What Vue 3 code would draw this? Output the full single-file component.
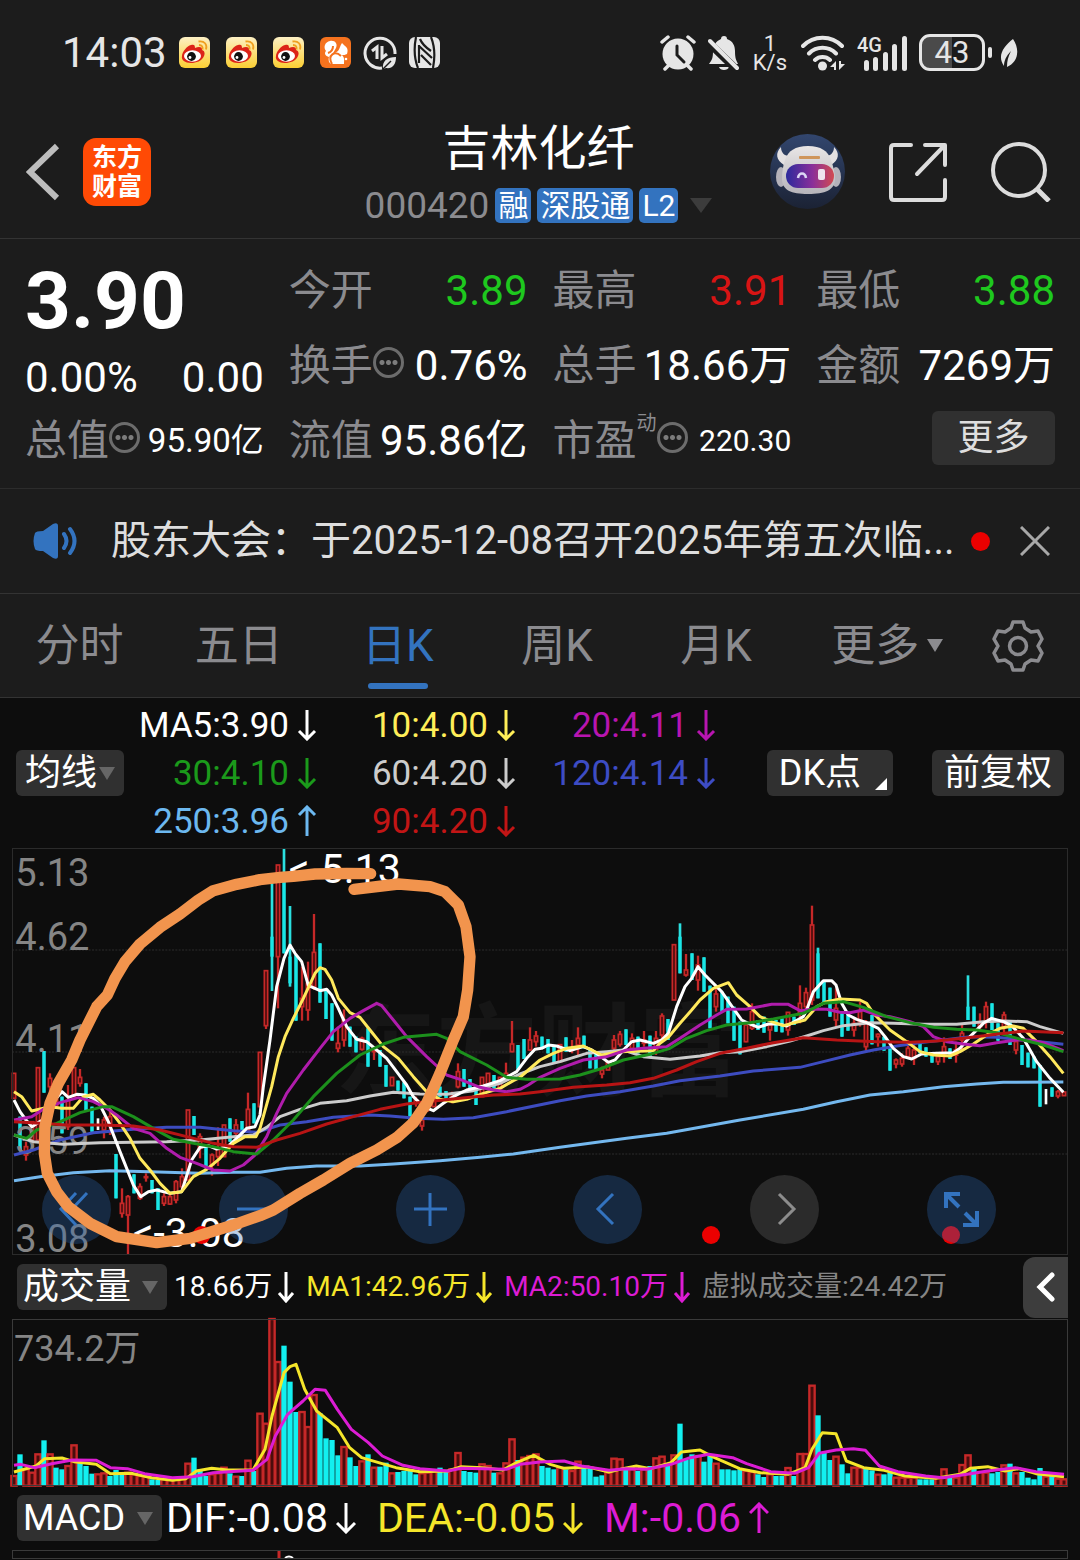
<script setup>
import { ref } from 'vue'

const weiboCount = 3
const tabs = ['分时', '五日', '日K', '周K', '月K']
const activeTab = ref('日K')

const averages = [
  { text: 'MA5:3.90', color: '#ffffff', up: false },
  { text: '10:4.00', color: '#ffee58', up: false },
  { text: '20:4.11', color: '#b815b0', up: false },
  { text: '30:4.10', color: '#1b9a1b', up: false },
  { text: '60:4.20', color: '#cccccc', up: false },
  { text: '120:4.14', color: '#3d4cc4', up: false },
  { text: '250:3.96', color: '#6cb8f0', up: true },
  { text: '90:4.20', color: '#c21515', up: false },
]

const volumeStats = [
  { text: '18.66万', color: '#ffffff' },
  { text: 'MA1:42.96万', color: '#f5e62a' },
  { text: 'MA2:50.10万', color: '#dc1cd4' },
]

const macdStats = [
  { text: 'DIF:-0.08', color: '#ffffff', up: false },
  { text: 'DEA:-0.05', color: '#f5e62a', up: false },
  { text: 'M:-0.06', color: '#dc1cd4', up: true },
]

// Each candle: kind (r rise, c fall, w flat), high, low, then the body's top and bottom when it is shorter than the wick.
const candleData = `r 700 775,c 830 930,r 905 962 920 945,r 845 900,r 683 900,c 633 758,r 700 755 715 740,r 750 800,c 770 880,r 735 870 780 860,
r 683 770,r 687 740 712 730,c 730 815,c 800 875,w 835 870,r 830 895 840 870,r 810 885 830 850,c 942 1075,r 1045 1133 1090 1120,r 1065 1245 1070 1125,
c 1003 1060,r 1030 1080 1040 1075,r 1000 1025 1010 1012,c 1020 1060,c 1045 1110,r 1060 1098 1070 1090,r 1060 1095 1070 1092,r 1020 1090 1025 1080,r 985 1050 1010 1040,r 810 1020,
c 828 885,r 880 955 890 925,c 920 985,r 940 1007 945 975,r 862 978 925 950,r 855 950,c 835 905,r 837 900 855 880,c 843 880,r 758 870 808 870,
c 790 850,r 637 800,r 392 567 392 557,c 130 453 290 350,r 75 505 75 350,c 24 340 110 340,c 198 440 350 430,c 345 542,r 380 542 475 500,r 365 542 430 510,
r 222 450 337 440,c 310 488,c 450 537,c 490 602,r 560 637 610 625,r 508 620 540 600,c 560 620,c 590 637,r 590 632 595 628,c 565 680,
r 620 660 630 635,c 630 680,c 675 740,r 712 737,c 722 752,c 727 775,c 770 840,r 770 800 780 790,r 800 872 840 858,r 770 815 790 800,
r 770 800,c 740 770,c 753 775,r 755 790 770 775,r 670 745 695 740,c 687 740,c 717 755,c 740 795,r 712 770,r 700 745,
c 705 745,r 712 745,r 668 715 700 712,r 543 637 612 635,c 615 690,c 597 657,r 562 632 600 630,r 573 620 588 605,c 590 625,c 597 640,
c 615 668,r 614 665,c 592 635,r 600 640 625 630,r 562 645 595 615,c 587 625,c 630 685,c 640 690,r 680 715 690 702,r 665 690,
r 585 640 600 625,r 573 620 583 613,c 568 615,r 580 640 595 625,c 590 640,r 573 620 600 610,c 587 650,r 573 645 595 635,r 520 600 528 585,c 537 600,
r 314 480,c 250 400 290 400,r 342 410 390 405,c 340 420,r 347 452 375 420,c 352 455,c 437 565,r 445 515 462 500,c 455 515,c 470 550,
c 500 602,c 545 643,r 550 607 555 605,r 490 570 515 565,c 540 570,c 530 578,r 555 602 555 570,c 540 575,c 535 577,r 517 587 517 570,
c 530 555,r 436 550 490 520,r 443 510 458 500,r 197 495 255 480,c 323 475 340 475,c 420 490,c 443 530,r 445 563 505 540,c 520 590,c 515 572,
r 530 590 550 570,r 485 560 515 545,r 540 632 550 620,c 525 613,r 580 620 583 590,c 590 632,c 625 692,r 655 685 660 672,r 640 680 655 672,r 600 655 625 650,
r 615 675 630 655,c 610 640,c 622 650,c 640 668,r 640 675 650 665,r 592 668 620 640,c 625 657,r 605 668 630 645,r 555 635 580 600,c 406 540 500 540,
c 500 560,r 520 570 550 560,r 485 565 500 545,c 490 570,c 550 602,r 515 580 525 560,c 545 615,r 600 643 605 630,c 615 675,c 638 682,
c 650 685,c 675 800,w 747 793,c 742 770,r 750 775 755 768,r 756 767`

const xAt = (i) => 42 + 18 * i

const candles = candleData.split(',').map((entry, i) => {
  const [kind, ...n] = entry.trim().split(' ')
  const [high, low, top = high, bottom = low] = n.map(Number)
  return { kind, x: xAt(i), high, low, top, height: Math.max(bottom - top, 3) }
})

const movingAverages = [
  { color: '#74b8ee', points: '42,1022 120,1010 220,998 330,992 450,995 600,1000 700,997 780,997 860,985 950,978 1080,978 1180,972 1320,962 1440,952 1540,942 1680,922 1880,895 2000,880 2100,862 2220,840 2410,808 2510,785 2610,765 2710,755 2830,740 2930,732 3010,727 3190,726' },
  { color: '#3d4cc0', points: '42,945 100,930 180,900 280,878 400,868 500,862 600,862 700,872 770,877 840,855 920,845 1000,832 1110,825 1170,828 1250,835 1330,838 1420,833 1520,815 1680,782 1760,768 1860,755 1960,738 2040,722 2160,708 2260,693 2400,682 2470,665 2550,645 2620,630 2690,618 2770,607 2830,600 2910,590 2990,592 3070,600 3190,613' },
  { color: '#cccccc', points: '42,885 100,905 190,913 300,908 400,907 500,905 600,900 700,890 760,885 800,862 840,830 900,808 960,790 1040,782 1110,768 1180,757 1260,762 1340,763 1420,752 1500,730 1560,702 1620,680 1680,665 1760,640 1820,635 1870,630 1900,640 1930,650 2010,658 2100,648 2160,638 2220,635 2300,620 2370,603 2420,588 2470,572 2530,557 2610,548 2680,550 2770,553 2870,553 2950,545 3010,543 3080,545 3120,560 3190,580' },
  { color: '#ffffff', points: '42,780 60,815 78,840 96,860 114,848 132,838 155,790 186,755 205,772 230,763 255,765 280,775 300,795 325,845 360,935 400,1035 422,1070 445,1055 470,1050 510,1060 545,1055 575,960 600,922 625,917 650,927 680,922 710,895 740,865 765,860 780,825 790,740 810,600 830,440 852,355 870,315 885,340 905,365 925,437 945,445 960,452 980,448 995,465 1015,505 1040,560 1070,598 1100,605 1130,630 1160,655 1190,695 1220,735 1240,770 1270,800 1300,812 1330,790 1360,770 1400,750 1450,738 1500,722 1550,695 1580,655 1605,628 1625,625 1645,615 1670,618 1710,632 1750,620 1775,630 1805,652 1825,667 1845,660 1870,630 1895,605 1920,600 1960,610 1985,600 2005,580 2030,500 2055,440 2075,415 2094,380 2115,405 2140,430 2165,455 2200,505 2225,540 2250,552 2275,562 2305,552 2335,552 2360,558 2410,530 2420,510 2440,455 2470,422 2495,422 2508,435 2525,490 2545,525 2570,538 2600,548 2635,565 2655,590 2680,625 2710,650 2735,657 2765,642 2810,640 2860,638 2880,625 2910,590 2950,550 2975,535 3010,545 3035,557 3070,595 3110,665 3150,715 3190,757' },
  { color: '#ffe95c', points: '42,755 65,770 95,813 150,800 185,805 220,805 250,770 280,763 300,780 330,810 360,850 390,895 420,955 450,990 480,1030 510,1060 545,1055 580,1010 620,988 660,955 700,910 735,890 768,890 780,865 815,740 835,650 855,590 880,535 910,475 945,400 960,383 975,388 995,420 1015,475 1050,518 1080,532 1110,570 1150,620 1195,655 1240,710 1280,755 1320,778 1360,785 1400,778 1450,760 1500,745 1540,722 1560,712 1585,690 1620,660 1660,640 1700,625 1750,618 1775,630 1805,645 1860,635 1960,632 1980,610 2005,592 2040,550 2075,510 2100,480 2140,445 2185,428 2210,465 2250,500 2280,530 2315,545 2350,557 2415,540 2450,500 2480,485 2520,477 2580,480 2600,490 2620,520 2670,570 2720,605 2760,635 2800,645 2850,648 2880,635 2920,612 2960,585 3000,565 3040,558 3070,565 3110,605 3150,650 3190,700' },
  { color: '#b01cac', points: '42,840 95,830 130,808 180,788 235,773 280,785 320,805 350,825 400,865 450,880 500,925 540,952 590,970 640,990 690,993 730,975 765,945 800,890 830,820 860,760 910,690 960,625 1000,575 1050,535 1090,512 1130,490 1145,497 1180,540 1220,590 1280,650 1340,705 1380,718 1440,742 1480,750 1520,755 1560,748 1585,735 1620,712 1680,685 1750,660 1820,650 1880,630 1930,625 2000,620 2040,595 2100,555 2150,525 2180,508 2240,507 2315,493 2365,493 2400,512 2440,507 2480,508 2520,517 2550,518 2590,510 2630,525 2670,530 2730,545 2770,560 2800,590 2840,605 2890,612 2940,617 2990,608 3050,600 3090,600 3130,608 3190,632' },
  { color: '#1c901c', points: '42,885 80,895 110,870 170,850 240,818 310,800 335,800 400,830 460,865 520,898 580,910 640,920 700,935 770,942 820,900 880,840 940,770 1010,700 1080,645 1150,612 1210,592 1310,583 1340,595 1380,635 1460,675 1520,712 1580,718 1680,717 1740,705 1800,687 1870,660 1950,643 2010,625 2060,595 2120,572 2180,555 2250,548 2320,537 2410,520 2470,490 2530,485 2590,502 2660,530 2730,548 2800,562 2870,568 2930,570 2990,578 3070,600 3130,615 3190,635' },
  { color: '#b81414', points: '42,845 120,850 200,855 300,855 400,858 480,870 560,890 640,910 700,920 770,922 830,900 900,880 980,852 1060,830 1140,808 1220,792 1280,785 1380,775 1480,765 1560,762 1620,755 1720,742 1820,735 1890,728 1960,715 2030,690 2090,665 2160,640 2240,625 2320,608 2410,593 2510,600 2630,605 2730,607 2810,603 2890,595 2970,585 3070,573 3190,578' },
]

const volumeData = `r680 c615 r660 r670 r615 c573 r615 c655 c660 r650 r588 c638 c650 c673 r675 r672 c680 c662 c672 r670
r675 r680 r682 c690 c692 r690 r690 r690 r688 r643 c625 c660 c680 r675 r672 r655 c672 r682 c680 r634
c665 r493 r523 r209 r338 c289 c397 c488 r488 r533 r437 c492 c567 c572 c618 r593 c624 c650 r636 c615
r655 c652 c640 r672 c668 c665 c665 c675 r672 r670 r665 c655 c668 r660 r611 c665 c668 c670 r645 r650
c670 r672 r642 r570 c632 r625 r620 r615 c650 c655 c660 r655 c660 r665 r637 c655 c655 c682 c678 r670
r628 r630 c660 r660 c665 r660 c650 r627 r622 c650 r618 c523 c630 c615 r620 c637 c620 r643 c660 c660
c663 c660 r665 r668 c675 c683 r675 c680 c680 r656 c680 r614 r614 r409 c498 c610 c632 r622 c645 c672
r655 r655 c655 c663 r676 c675 c670 r685 r685 r685 r685 c690 c690 c690 r686 r660 c682 r685 r647 r618
c655 r668 r670 c672 c668 r648 c643 r672 c668 c685 c690 c656 r682 c680 r688 r690`

const volumes = volumeData.split(/\s+/).map((entry, i) => ({
  kind: entry[0],
  x: xAt(i),
  top: Number(entry.slice(1)),
}))

const volumeLines = [
  { color: '#f5e62a', points: '42,668 108,650 134,628 186,626 222,637 289,645 331,673 393,672 455,685 517,693 558,688 589,665 635,657 682,662 759,662 795,600 816,500 852,370 870,352 888,345 914,420 950,485 1012,535 1049,595 1085,625 1136,640 1188,655 1260,667 1343,665 1384,652 1446,655 1508,662 1550,640 1601,618 1651,645 1692,657 1765,653 1827,668 1868,658 1909,650 1951,658 2013,640 2044,608 2100,602 2137,622 2178,640 2219,658 2281,670 2364,675 2415,655 2436,600 2467,550 2508,553 2539,635 2591,655 2653,663 2715,680 2808,687 2880,675 2911,657 2963,652 3015,665 3056,658 3108,673 3192,682' },
  { color: '#dc1cd4', points: '42,648 62,645 103,655 155,643 217,632 289,633 331,655 382,658 434,673 517,685 578,682 640,670 759,663 801,630 826,560 863,495 909,455 945,420 976,423 1012,480 1054,540 1105,580 1147,620 1209,648 1260,658 1343,665 1384,657 1446,658 1519,660 1560,645 1620,638 1692,635 1744,650 1827,663 1878,658 1940,660 2013,645 2064,627 2126,615 2198,625 2240,643 2312,667 2384,672 2426,655 2457,612 2508,602 2560,598 2596,603 2638,650 2694,667 2777,680 2829,685 2901,675 2963,665 3046,655 3108,667 3192,675' },
]

const priceScale = [
  { text: '5.13', y: 137 },
  { text: '4.62', y: 330 },
  { text: '4.11', y: 636 },
  { text: '3.59', y: 942 },
  { text: '3.08', y: 1235 },
]

const chartControls = [
  { label: '最早', path: 'M34 18 19 34 34 50M45 18 30 34 45 50' },
  { label: '缩小', path: 'M18 34h33' },
  { label: '放大', path: 'M18 34h33M34 18v33' },
  { label: '向左', path: 'M40 19 25 34 40 49' },
  { label: '向右', path: 'M29 19 44 34 29 49', muted: true },
  { label: '全屏', path: 'M19 33V19h14M20 20l12 12M50 36v14H36M49 49 38 38', bold: true },
]
</script>

<template>
  <div class="page">
    <div class="status">
      <div class="status-group">
        <span class="clock">14:03</span>
        <svg v-for="n in weiboCount" :key="n" class="app-icon" viewBox="0 0 31 31">
          <defs>
            <linearGradient :id="'wb' + n" x1="0" y1="0" x2="0" y2="1">
              <stop offset="0" stop-color="#fdf0c4" />
              <stop offset="1" stop-color="#fbcf33" />
            </linearGradient>
          </defs>
          <rect width="31" height="31" rx="6" :fill="'url(#wb' + n + ')'" />
          <path d="M12 8c3-1 4 0 4 3 4-2 8-1 7 2 3 1 3 4 2 6-2 5-8 7-13 7-6 0-10-3-9-7 0-4 5-10 9-11z" fill="#dc2318" />
          <ellipse cx="13.500" cy="19" rx="8.500" ry="5.800" fill="#fff" />
          <circle cx="12.500" cy="19.500" r="4.400" fill="#111" />
          <circle cx="11" cy="20.500" r="1.400" fill="#fff" />
          <path d="M20 8c3 0 4 2 3.500 4.500M19.500 4.500c6-1 9 3 7.500 8" fill="none" stroke="#f0a020" stroke-width="1.800" />
        </svg>
        <svg class="app-icon" viewBox="0 0 31 31">
          <rect width="31" height="31" rx="6" fill="#f5721e" />
          <path d="M10 4c5-1 8 3 6 7l-4 7 6-4c2-3 2-5 4-8l3 3c3 2 3 5 2 8-2 1-3 1-5 1 3 3 2 6 2 9H12c-3 0-4-4-3-7-4-1-5-4-3-6-3-4-1-9 4-10z" fill="#fff" />
          <path d="M12 27c-5-9 3-14 9-8M13 9c0 4-2 6-5 7" fill="none" stroke="#f5721e" stroke-width="2" />
          <circle cx="26" cy="22" r="1.300" fill="#fff" />
        </svg>
        <svg class="round-icon" viewBox="0 0 34 34" fill="none" stroke="#e6e6e6" stroke-width="3">
          <path d="M19 32A15 15 0 1 1 32 18" />
          <path d="M9 15l5-4v12M19 10v12l5-4" stroke-width="3" />
          <path d="M20 33c-1-8 4-12 13-12 0 8-4 12-10 11z" fill="#e6e6e6" stroke="none" />
          <path d="M20 33l8-8" stroke="#1c1c1c" stroke-width="1.500" />
        </svg>
        <svg class="app-icon" viewBox="0 0 31 31">
          <rect width="31" height="31" rx="6" fill="#e6e6e6" />
          <path d="M7 0c-2 10-2 21 2 31M24 31c2-10 2-21-2-31M11 2c2 5 5 8 11 12M10 9l13 12M12 18l10 10M10 8v18" stroke="#1c1c1c" stroke-width="2.200" fill="none" />
        </svg>
      </div>
      <div class="status-group right">
        <svg width="36" height="36" viewBox="0 0 36 36" stroke-linecap="round">
          <circle cx="18" cy="19" r="15.500" fill="#e6e6e6" />
          <path d="M2 7l6-5M34 7l-6-5M5 34l4-4M31 34l-4-4" stroke="#e6e6e6" stroke-width="3.500" />
          <path d="M17 11v9l7 7" stroke="#1c1c1c" stroke-width="3" fill="none" />
        </svg>
        <svg width="31" height="36" viewBox="0 0 31 36">
          <path d="M16 1c2 0 3 1 3 3 6 2 8 7 8 12 0 7 1 9 3 13H1c3-4 4-6 4-13 0-5 3-10 8-12 0-2 1-3 3-3zM11 32h10c-1 4-9 4-10 0z" fill="#e6e6e6" />
          <path d="M-2 5 30 36" stroke="#1c1c1c" stroke-width="8" />
          <path d="M2 6 29 33" stroke="#e6e6e6" stroke-width="4" stroke-linecap="round" />
        </svg>
        <span class="speed"><span>1</span><span>K/s</span></span>
        <svg width="44" height="36" viewBox="0 0 44 36" fill="none" stroke="#e6e6e6" stroke-width="4" stroke-linecap="round">
          <path d="M2 11A27 27 0 0 1 41 11M8 18.500A19 19 0 0 1 35 18.500M14 25A11 11 0 0 1 29 25" />
          <circle cx="21.500" cy="31" r="4.500" fill="#e6e6e6" stroke="none" />
          <path d="M35 26v9h-2v-3h-4zM38 35v-9h2v3h4z" fill="#e6e6e6" stroke="none" />
        </svg>
        <svg width="50" height="36" viewBox="0 0 50 36" fill="#e6e6e6">
          <text x="0" y="17" class="net">4G</text>
          <rect x="7" y="25" width="5" height="11" rx="2.500" />
          <rect x="16" y="22" width="5" height="14" rx="2.500" />
          <rect x="26" y="17" width="5" height="19" rx="2.500" />
          <rect x="35" y="9" width="5" height="27" rx="2.500" />
          <rect x="45" y="1" width="5" height="35" rx="2.500" />
        </svg>
        <span class="battery-wrap"><span class="battery">43</span><span class="nub"></span></span>
        <svg class="leaf" width="18" height="30" viewBox="0 0 18 30">
          <path d="M13 1c8 12 4 24-6 28 0-6 1-10 4-16-5 5-7 10-7 15C-3 18 3 9 13 1z" fill="#e6e6e6" />
        </svg>
      </div>
    </div>

    <header class="header">
      <div class="header-left">
        <button class="plain" aria-label="返回">
          <svg width="34" height="58" viewBox="0 0 34 58"><path d="M31 3 4 29 31 55" fill="none" stroke="#bdbdbd" stroke-width="6" /></svg>
        </button>
        <span class="logo"><span>东方</span><span>财富</span></span>
      </div>
      <div class="title-block">
        <h1>吉林化纤</h1>
        <div class="code-row">
          <span class="code">000420</span>
          <span class="tag">融</span>
          <span class="tag">深股通</span>
          <span class="tag">L2</span>
          <span class="caret big"></span>
        </div>
      </div>
      <div class="header-right">
        <button class="plain" aria-label="助手">
          <svg width="75" height="75" viewBox="0 0 75 75">
            <defs>
              <linearGradient id="visor"><stop offset="0" stop-color="#2c2a9c" /><stop offset=".55" stop-color="#8a2f9a" /><stop offset="1" stop-color="#d24a50" /></linearGradient>
              <linearGradient id="orb" x1="0" y1="0" x2="0" y2="1"><stop offset="0" stop-color="#32466e" /><stop offset="1" stop-color="#1b2234" /></linearGradient>
              <linearGradient id="shell" x1="0" y1="0" x2="0" y2="1"><stop offset="0" stop-color="#e9e6e6" /><stop offset="1" stop-color="#b6b4ba" /></linearGradient>
            </defs>
            <circle cx="37.500" cy="37.500" r="37.500" fill="url(#orb)" />
            <path d="M11 13c-6 6-5 13 3 18l9-9c-7 1-12-2-12-9zM64 13c6 6 5 13-3 18l-9-9c7 1 12-2 12-9z" fill="#e4e1e2" />
            <ellipse cx="11" cy="43" rx="5" ry="10" fill="#b4b2ba" />
            <ellipse cx="66" cy="43" rx="5" ry="10" fill="#b4b2ba" />
            <path d="M38 12c13 0 20 5 23 14 2 6 4 12 4 19 0 11-10 15-27 15S12 56 12 45c0-7 1-13 3-19 3-9 10-14 23-14z" fill="url(#shell)" />
            <rect x="16" y="30" width="48" height="24" rx="12" fill="url(#visor)" />
            <rect x="29" y="22" width="21" height="3" rx="1" fill="#cf955b" />
            <path d="M28 44c1-6 7-6 8 0" fill="none" stroke="#dcd7f4" stroke-width="2.500" />
            <rect x="48" y="35" width="7" height="11" rx="2" fill="#eee3ee" />
          </svg>
        </button>
        <button class="plain" aria-label="分享">
          <svg width="58" height="60" viewBox="0 0 58 60" fill="none" stroke="#dcdcdc" stroke-width="4" stroke-linecap="round" stroke-linejoin="round">
            <path d="M22 3H5q-3 0-3 3v49q0 3 3 3h48q3 0 3-3V38M36 3h20v20M55 4 28 32" />
          </svg>
        </button>
        <button class="plain" aria-label="搜索">
          <svg width="60" height="60" viewBox="0 0 60 60" fill="none" stroke="#dcdcdc" stroke-width="4">
            <circle cx="28" cy="28" r="26" /><path d="M46 47l12 12" stroke-width="5" />
          </svg>
        </button>
      </div>
    </header>

    <section class="quote">
      <div class="price">3.90</div>
      <div class="pair change"><span>0.00%</span><span>0.00</span></div>
      <div class="pair"><span class="label">今开</span><span class="green">3.89</span></div>
      <div class="pair"><span class="label">最高</span><span class="red">3.91</span></div>
      <div class="pair"><span class="label">最低</span><span class="green">3.88</span></div>
      <div class="pair"><span class="label">换手<i class="info"></i></span><span>0.76%</span></div>
      <div class="pair"><span class="label">总手</span><span>18.66万</span></div>
      <div class="pair"><span class="label">金额</span><span>7269万</span></div>
      <div class="pair"><span class="label">总值<i class="info"></i></span><span class="mid">95.90亿</span></div>
      <div class="pair"><span class="label">流值</span><span>95.86亿</span></div>
      <div class="pair"><span class="label">市盈<small>动</small><i class="info"></i></span><span class="small">220.30</span></div>
      <div class="pair end"><button class="more">更多</button></div>
    </section>

    <section class="news">
      <svg width="46" height="38" viewBox="0 0 46 38">
        <path d="M2 11q1-2 8-2L20 2q5-2 5 2v30q0 4-5 2l-10-7q-7 0-8-2-3-8 0-16z" fill="#3373bf" />
        <path d="M31 12q5 7 0 14M37 7q9 12 0 24" fill="none" stroke="#3373bf" stroke-width="4" stroke-linecap="round" />
      </svg>
      <a href="#" class="headline">股东大会：于2025-12-08召开2025年第五次临...</a>
      <span class="dot"></span>
      <button class="plain" aria-label="关闭">
        <svg width="30" height="30" viewBox="0 0 30 30"><path d="M1 1l28 28M29 1 1 29" stroke="#a8a8a8" stroke-width="3" /></svg>
      </button>
    </section>

    <nav class="tabs">
      <button v-for="t in tabs" :key="t" class="tab" :class="{ active: t === activeTab }" @click="activeTab = t">{{ t }}</button>
      <button class="tab">更多<span class="caret tiny"></span></button>
      <button class="plain gear" aria-label="设置">
        <svg width="52" height="52" viewBox="0 0 52 52" fill="none" stroke="#8b8b8f" stroke-width="3.500" stroke-linejoin="round">
          <path d="M21 2h10l2 6 6 4 7-1 4 8-4 7 4 7-4 8-7-1-6 4-2 6H21l-2-6-6-4-7 1-4-8 4-7-4-7 4-8 7 1 6-4z" />
          <circle cx="26" cy="26" r="8.500" />
        </svg>
      </button>
    </nav>

    <section class="ma-bar">
      <label class="picker ma-picker"><select aria-label="均线"><option>均线</option></select></label>
      <div class="ma-grid">
        <span v-for="m in averages" :key="m.text" class="stat" :style="{ color: m.color }">
          {{ m.text }}<svg class="arrow" :class="{ up: m.up }" viewBox="0 0 20 32"><path d="M10 1v29M2 22l8 8 8-8" /></svg>
        </span>
      </div>
      <div class="ma-actions">
        <button class="chip dk">DK点<span class="corner"></span></button>
        <button class="chip">前复权</button>
      </div>
    </section>

    <section class="chart">
      <svg class="plot" viewBox="36 24 3168 1221">
        <text x="1004" y="745" class="watermark">东方财富</text>
        <path d="M36 330H3204M36 636H3204M36 942H3204" stroke="#2c2c2c" stroke-width="3" stroke-dasharray="6 4" />
        <g v-for="c in candles" :key="c.x" :class="c.kind">
          <line :x1="c.x" :x2="c.x" :y1="c.high" :y2="c.low" />
          <rect :x="c.x - 5" :y="c.top" width="10" :height="c.height" />
        </g>
        <text v-for="p in priceScale" :key="p.text" x="46" :y="p.y" class="scale">{{ p.text }}</text>
        <polyline v-for="m in movingAverages" :key="m.color" class="ma-line" :points="m.points" :stroke="m.color" />
        <text x="866" y="130" class="mark">&lt;-5.13</text>
        <text x="398" y="1222" class="mark">&lt;-3.08</text>
        <circle cx="605" cy="1185" r="27" fill="#eb0000" />
        <circle cx="2133" cy="1185" r="27" fill="#eb0000" />
        <circle cx="2853" cy="1185" r="27" fill="#eb0000" />
      </svg>
      <div class="controls">
        <button v-for="c in chartControls" :key="c.label" class="round" :class="{ muted: c.muted, bold: c.bold }" :aria-label="c.label">
          <svg viewBox="0 0 69 69"><path :d="c.path" /></svg>
        </button>
      </div>
      <svg class="scribble" viewBox="36 24 3168 1221">
        <path d="M1112 101 1040 100 945 102 880 109 840 112 780 119 710 133 640 152 595 180 540 222 480 262 420 312 375 365 345 415 322 465 290 500 240 600 215 660 175 730 150 790 135 860 133 940 142 1000 170 1055 205 1100 270 1150 350 1190 470 1208 570 1195 700 1155 780 1127 820 1110 900 1060 970 1020 1050 970 1130 930 1190 893 1240 848 1280 790 1320 700 1360 600 1390 530 1403 450 1410 350 1398 260 1375 195 1335 155 1290 140 1195 132 1062 148" />
      </svg>
    </section>

    <section class="indicator">
      <label class="picker vol-picker"><select aria-label="成交量"><option>成交量</option></select></label>
      <div class="vol-stats">
        <span v-for="s in volumeStats" :key="s.text" class="stat" :style="{ color: s.color }">
          {{ s.text }}<svg class="arrow" viewBox="0 0 20 32"><path d="M10 1v29M3 22l7 8 7-8" /></svg>
        </span>
        <span class="virtual">虚拟成交量:24.42万</span>
      </div>
      <button class="drawer" aria-label="展开">
        <svg width="20" height="30" viewBox="0 0 20 30"><path d="M16 3 4 15 16 27" fill="none" stroke="#fff" stroke-width="5" stroke-linecap="round" /></svg>
      </button>
    </section>

    <section class="volume">
      <svg class="plot" viewBox="36 209 3168 501">
        <text x="42" y="336" class="scale peak">734.2万</text>
        <g v-for="v in volumes" :key="v.x" :class="['bar', v.kind]">
          <rect :x="v.x - 8" :y="v.top" width="16" :height="709 - v.top" />
        </g>
        <polyline v-for="m in volumeLines" :key="m.color" class="ma-line" :points="m.points" :stroke="m.color" />
      </svg>
    </section>

    <section class="indicator">
      <label class="picker macd-picker"><select aria-label="MACD"><option>MACD</option></select></label>
      <div class="macd-stats">
        <span v-for="s in macdStats" :key="s.text" class="stat" :style="{ color: s.color }">
          {{ s.text }}<svg class="arrow" :class="{ up: s.up }" viewBox="0 0 20 32"><path d="M10 1v29M1 21l9 9 9-9" /></svg>
        </span>
      </div>
    </section>

    <section class="macd">
      <svg class="plot" viewBox="0 0 1056 9">
        <path d="M267 0v9" stroke="#c62828" stroke-width="3" />
        <path d="M273 8q4-3 8 0" stroke="#fff" stroke-width="2" fill="none" />
      </svg>
    </section>
  </div>
</template>

<style>
body {
  margin: 0;
  background: #0d0d0d;
}
</style>

<style scoped>
.page {
  background: #1c1c1c;
  color: #fff;
  font-family: Roboto, "Noto Sans CJK SC", sans-serif;
  overflow: hidden;
}
.page * {
  box-sizing: border-box;
}
button,
select {
  font-family: inherit;
  color: inherit;
  border: 0;
  padding: 0;
  margin: 0;
  background: none;
}
svg {
  display: block;
  flex: none;
}
.plain {
  display: flex;
}

.status {
  display: flex;
  justify-content: space-between;
  align-items: center;
  height: 105px;
  padding: 0 62px;
  color: #e6e6e6;
}
.status-group {
  display: flex;
  align-items: center;
  gap: 16px;
}
.status-group.right {
  gap: 12px;
}
.clock {
  font-size: 42px;
  line-height: 48px;
  margin-right: -4px;
}
.app-icon {
  width: 31px;
  height: 31px;
}
.round-icon {
  width: 34px;
  height: 34px;
  margin: 0 -4px;
}
.speed {
  display: flex;
  flex-direction: column;
  align-items: center;
  font-size: 22px;
  line-height: 19px;
  margin: 0 2px;
}
.net {
  font-size: 20px;
  font-weight: 500;
}
.battery-wrap {
  display: flex;
  align-items: center;
  gap: 3px;
}
.battery {
  width: 66px;
  height: 37px;
  border: 3px solid #e6e6e6;
  border-radius: 11px;
  background: linear-gradient(90deg, #4a4a4a 50%, transparent 50%);
  font-size: 31px;
  line-height: 32px;
  text-align: center;
}
.nub {
  width: 4px;
  height: 11px;
  border-radius: 2px;
  background: #e6e6e6;
}
.leaf {
  margin-left: -4px;
}

.header {
  display: grid;
  grid-template-columns: 1fr auto 1fr;
  align-items: center;
  height: 134px;
  padding: 0 29px 0 26px;
  border-bottom: 1px solid #333;
}
.header-left,
.header-right {
  display: flex;
  align-items: center;
}
.header-left {
  gap: 23px;
}
.header-right {
  justify-content: flex-end;
  gap: 44px;
}
.logo {
  display: flex;
  flex-direction: column;
  justify-content: center;
  align-items: center;
  width: 68px;
  height: 68px;
  border-radius: 13px;
  background: #ff4a05;
  font-size: 25px;
  line-height: 29px;
  font-weight: 700;
}
h1 {
  margin: 0;
  font-size: 48px;
  line-height: 58px;
  font-weight: 400;
  text-align: center;
}
.code-row {
  display: flex;
  align-items: center;
  justify-content: center;
  gap: 6px;
  margin-top: 10px;
}
.code {
  color: #8b8b8f;
  font-size: 37px;
  line-height: 36px;
}
.tag {
  padding: 0 3px;
  border-radius: 5px;
  background: #3373bf;
  font-size: 30px;
  line-height: 35px;
}
.caret {
  display: inline-block;
  border: 11px solid transparent;
  border-top: 15px solid #3c3c3c;
  border-bottom: 0;
}
.caret.big {
  margin-left: 6px;
}
.caret.tiny {
  border-width: 13px 8px 0;
  border-top-color: #8b8b8f;
  margin-left: 8px;
}

.quote {
  display: grid;
  grid-template-columns: repeat(4, 1fr);
  grid-template-rows: repeat(3, 75px);
  column-gap: 25px;
  padding: 14px 25px 10px;
  border-bottom: 1px solid #2c2c2c;
  font-size: 42px;
  line-height: 50px;
}
.price {
  grid-column: 1;
  grid-row: 1;
  font-size: 80px;
  line-height: 96px;
  font-weight: 700;
}
.change {
  grid-column: 1;
  grid-row: 2;
  padding-top: 24px;
}
.pair {
  display: flex;
  justify-content: space-between;
  align-items: center;
  white-space: nowrap;
}
.label {
  display: flex;
  align-items: center;
  color: #8b8b8f;
}
.label small {
  font-size: 20px;
  line-height: 20px;
  margin-bottom: 36px;
}
.info {
  width: 31px;
  height: 31px;
  margin-bottom: 6px;
  border: 3px solid #6c6c6c;
  border-radius: 50%;
  background:
    radial-gradient(circle at 6px 50%, #7c7c7c 2px, transparent 3px),
    radial-gradient(circle at 50% 50%, #7c7c7c 2px, transparent 3px),
    radial-gradient(circle at 19px 50%, #7c7c7c 2px, transparent 3px);
}
.green {
  color: #1ec81e;
}
.red {
  color: #d81414;
}
.mid {
  font-size: 33px;
}
.small {
  font-size: 30px;
}
.end {
  justify-content: flex-end;
  align-items: flex-start;
  padding-top: 8px;
}
.more {
  width: 123px;
  height: 54px;
  border-radius: 6px;
  background: #303030;
  color: #dedede;
  font-size: 36px;
  line-height: 50px;
}

.news {
  display: flex;
  align-items: center;
  height: 105px;
  padding: 0 30px 0 33px;
  border-bottom: 1px solid #333;
}
.headline {
  flex: 1;
  margin-left: 32px;
  color: #dedede;
  font-size: 40px;
  line-height: 50px;
  text-decoration: none;
  white-space: nowrap;
}
.dot {
  width: 19px;
  height: 19px;
  border-radius: 50%;
  background: #eb0000;
  margin-right: 30px;
}

.tabs {
  display: grid;
  grid-template-columns: repeat(5, 159fr) 183fr 78fr;
  height: 104px;
  padding-right: 23px;
  border-bottom: 1px solid #333;
}
.tab {
  position: relative;
  display: flex;
  align-items: center;
  justify-content: center;
  color: #8b8b8f;
  font-size: 44px;
  line-height: 50px;
}
.tab.active {
  color: #3373bf;
}
.tab.active::after {
  content: "";
  position: absolute;
  bottom: 8px;
  left: 50%;
  width: 60px;
  height: 6px;
  margin-left: -30px;
  border-radius: 3px;
  background: #3373bf;
}
.gear {
  align-items: center;
  justify-content: center;
}

.ma-bar,
.chart,
.indicator,
.volume,
.macd {
  background: #0d0d0d;
}
.ma-bar {
  display: flex;
  align-items: center;
  height: 150px;
  padding: 0 16px;
}
.picker {
  position: relative;
  flex: none;
  height: 46px;
  border-radius: 6px;
  background: #303030;
}
.picker::after {
  content: "";
  position: absolute;
  right: 9px;
  top: 17px;
  border: 8px solid transparent;
  border-top: 13px solid #666;
  border-bottom: 0;
  pointer-events: none;
}
.picker select {
  appearance: none;
  display: block;
  width: 100%;
  height: 46px;
  padding-left: 6px;
  color: #fff;
  font-size: 36px;
  line-height: 46px;
}
.ma-picker {
  width: 108px;
}
.ma-picker select {
  padding-left: 9px;
}
.ma-grid {
  display: grid;
  grid-template-columns: 193fr 199fr 200fr;
  grid-auto-rows: 48px;
  flex: 0 1 592px;
  justify-items: end;
  font-size: 35px;
}
.stat {
  display: inline-flex;
  align-items: center;
  gap: 8px;
  white-space: nowrap;
}
.arrow {
  width: 20px;
  height: 32px;
  fill: none;
  stroke: currentColor;
  stroke-width: 3;
}
.arrow.up {
  transform: rotate(180deg);
}
.ma-actions {
  display: flex;
  gap: 39px;
  margin-left: auto;
}
.chip {
  position: relative;
  height: 46px;
  padding: 0 12px;
  border-radius: 6px;
  background: #303030;
  font-size: 36px;
  line-height: 44px;
  white-space: nowrap;
}
.dk {
  padding-right: 32px;
}
.corner {
  position: absolute;
  right: 6px;
  bottom: 6px;
  border-left: 12px solid transparent;
  border-bottom: 12px solid #fff;
}

.chart {
  position: relative;
  padding: 0 12px;
}
.plot {
  width: 100%;
  height: auto;
  overflow: visible;
  outline: 1px solid #2b2b2b;
  outline-offset: -1px;
}
.watermark {
  font-size: 304px;
  font-weight: 700;
  fill: #161616;
}
.scale {
  font-size: 114px;
  fill: #858585;
}
.peak {
  font-size: 108px;
}
.mark {
  font-size: 123px;
  fill: #fff;
}
.r line {
  stroke: #c62828;
  stroke-width: 7;
}
.r rect {
  fill: #4a0c0c;
  stroke: #c62828;
  stroke-width: 5;
}
.c line {
  stroke: #2be0e0;
  stroke-width: 8;
}
.c rect {
  fill: #19e6e6;
}
.w line {
  stroke: #fff;
  stroke-width: 8;
}
.w rect {
  fill: none;
}
.bar.r rect {
  stroke-width: 7;
}
.bar.c rect {
  fill: #12f0f0;
}
.ma-line {
  fill: none;
  stroke-width: 9;
  stroke-linejoin: round;
}
.controls {
  position: absolute;
  left: 42px;
  right: 84px;
  bottom: 11px;
  display: flex;
  justify-content: space-between;
}
.round {
  width: 69px;
  height: 69px;
  border-radius: 50%;
  background: rgba(44, 104, 176, 0.32);
}
.round svg {
  fill: none;
  stroke: #3373bf;
  stroke-width: 3;
}
.round.bold svg {
  stroke-width: 4;
}
.round.muted {
  background: #2b2b2b;
}
.round.muted svg {
  stroke: #8d8d8d;
}
.scribble {
  position: absolute;
  top: 0;
  left: 12px;
  width: calc(100% - 24px);
  height: 100%;
  pointer-events: none;
  fill: none;
  stroke: #f2944d;
  stroke-width: 34;
  stroke-linecap: round;
  stroke-linejoin: round;
}

.indicator {
  display: flex;
  align-items: center;
  height: 64px;
  padding: 0 12px 0 17px;
}
.vol-picker {
  width: 150px;
}
.macd-picker {
  width: 145px;
}
.vol-stats {
  display: flex;
  align-items: center;
  gap: 10px;
  margin-left: 7px;
  font-size: 28px;
  line-height: 44px;
}
.vol-stats .stat {
  gap: 4px;
}
.virtual {
  color: #858585;
  white-space: nowrap;
}
.drawer {
  display: flex;
  flex: none;
  align-items: center;
  justify-content: center;
  width: 45px;
  height: 61px;
  margin-left: auto;
  border-radius: 12px 0 0 12px;
  background: #3d3d3d;
}
.volume,
.macd {
  padding: 0 12px;
}
.volume .plot,
.macd .plot {
  outline-color: #3a3a3a;
}
.macd-stats {
  display: flex;
  gap: 21px;
  margin-left: 4px;
  font-size: 41px;
  line-height: 48px;
}
</style>
